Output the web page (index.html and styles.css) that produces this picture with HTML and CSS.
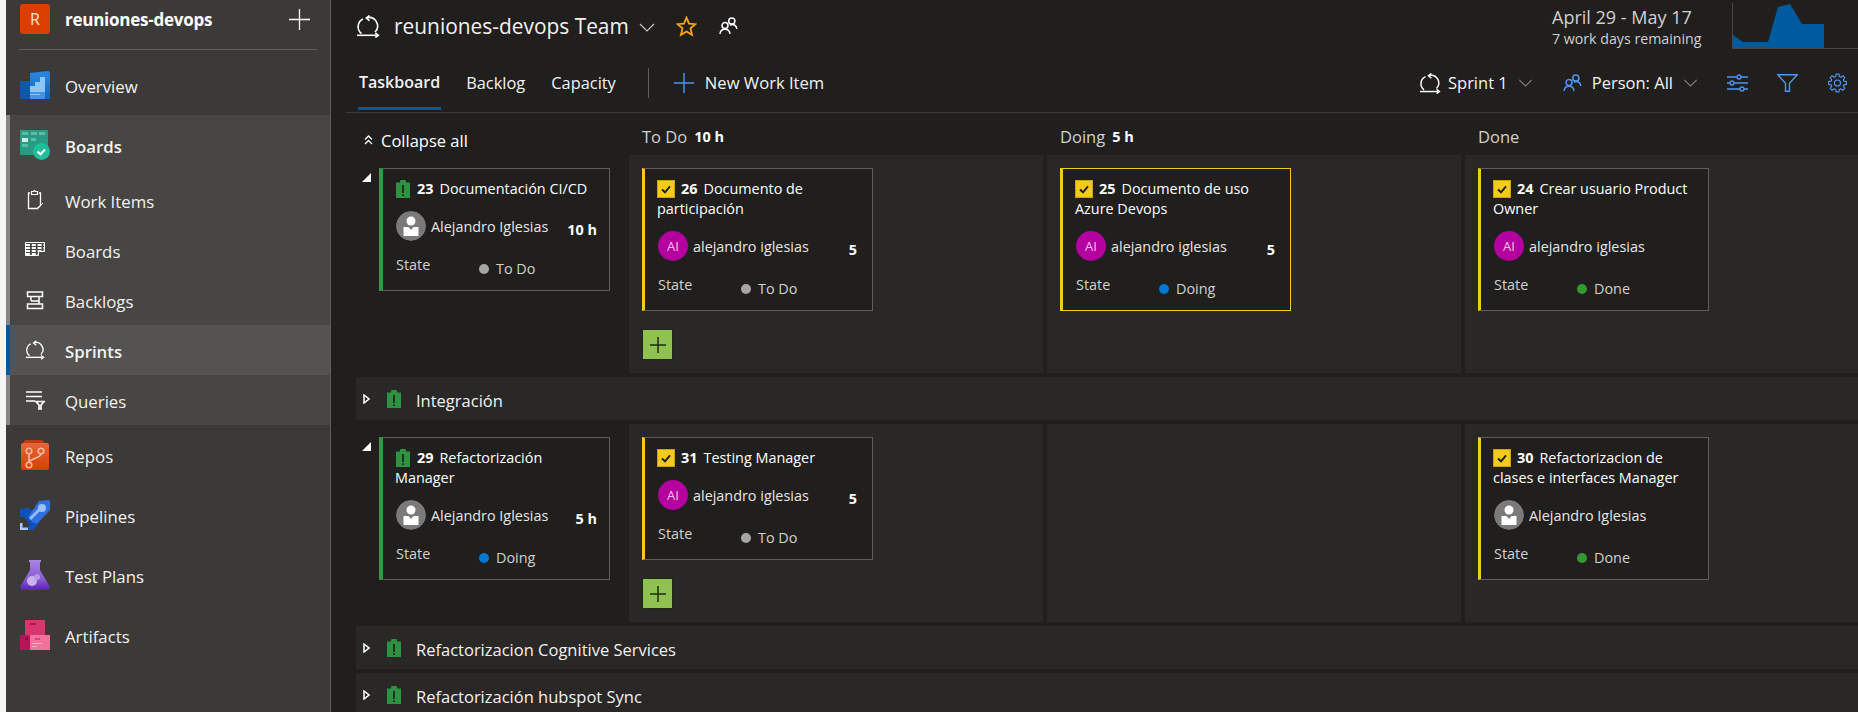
FILE: index.html
```html
<!DOCTYPE html>
<html lang="en">
<head>
<meta charset="utf-8">
<title>Taskboard</title>
<link rel="stylesheet" href="styles.css">
</head>
<body>
<svg class="defs" aria-hidden="true">
  <symbol id="sprint" viewBox="0 0 24 23"><g fill="none" stroke="currentColor" stroke-width="1.600"><path d="M11 2.700A8.500 8.500 0 0 1 19 17"/><path d="M7 4A8.500 8.500 0 0 0 5.500 18.500"/><path d="M13.500.5 10.300 3l3.200 2.700"/><path d="M1 20.300h20"/><path d="M19.300 18l3 2.300-3 2.300"/></g></symbol>
  <symbol id="people" viewBox="0 0 19 18"><g fill="none" stroke="currentColor" stroke-width="1.500"><circle cx="12.800" cy="4" r="3.100"/><circle cx="6" cy="8.600" r="3"/><path d="M1 17c.3-3 2-4.800 5-4.800s4.700 1.800 5 4.800"/><path d="M11 8.500c.6-.6 1.100-.9 2-.9 2.600 0 4.400 1.600 4.800 4.400"/></g></symbol>
  <symbol id="chev" viewBox="0 0 16 9"><path d="M1 1l7 7 7-7" fill="none" stroke="currentColor" stroke-width="1.200"/></symbol>
  <symbol id="req" viewBox="0 0 14 18"><path fill="#2f9142" d="M0 2.500h4V.5L5 0h4l1 .5v2h4V18H0z"/><path fill="#16351e" d="M6 5h2v8H6zM6 14.300h2v1.700H6z"/></symbol>
  <symbol id="task" viewBox="0 0 18 18"><rect x=".5" y=".5" width="17" height="17" fill="#f2cb1d" stroke="#c9a11a"/><path d="M5 9.500l3 2.800 5-6" fill="none" stroke="#1f1e1d" stroke-width="1.900"/></symbol>
  <symbol id="user" viewBox="0 0 30 30"><circle cx="15" cy="15" r="15" fill="#7a7a7a"/><circle cx="15" cy="10" r="4.500" fill="#fff"/><path fill="#fff" d="M7.500 16h5l2.500 3 2.500-3h5v9H7.500z"/></symbol>
  <symbol id="open" viewBox="0 0 9 9"><path fill="#fff" d="M9 0v9H0z"/></symbol>
  <symbol id="closed" viewBox="0 0 7 10"><path d="M1 1l5 4-5 4z" fill="none" stroke="#fff" stroke-width="1.500"/></symbol>
</svg>

<nav class="sidebar">
  <div class="project">
    <span class="project-badge">R</span>
    <span class="project-name">reuniones-devops</span>
    <svg class="project-add" viewBox="0 0 21 21"><path d="M10.500 0v21M0 10.500h21" stroke="currentColor" stroke-width="1.300"/></svg>
  </div>
  <div class="nav-rule"></div>
  <a class="nav-item">
    <svg class="nav-icon" viewBox="0 0 30 28"><defs><linearGradient id="ov" x1="0" y1="0" x2="0" y2="1"><stop offset="0" stop-color="#2b88e0"/><stop offset="1" stop-color="#0d66c2"/></linearGradient></defs><path fill="#0f5aa8" d="M0 10h11v18H2a2 2 0 0 1-2-2z"/><path fill="url(#ov)" d="M10 2l18-2a2 2 0 0 1 2 2v26H10z"/><path fill="#8cc6f5" d="M10 15h5v-4h5V6h5v14H10z"/><path fill="#3e95e2" d="M10 20h15v8H10z"/><path fill="#8cc6f5" d="M10 20h15v1H10zM10 23h10v1H10z"/></svg>
    <span>Overview</span>
  </a>
  <div class="nav-group">
    <a class="nav-item nav-head">
      <svg class="nav-icon" viewBox="0 0 30 30"><rect width="28" height="25" rx="1" fill="#2a9a82"/><path fill="#4cc2a8" d="M2 2h6v3H2zM11 2h6v3h-6zM19 2h6v3h-6zM11 8h5v3h-5zM2 14h6v3H2z"/><path fill="#c9f2e6" d="M2 8h6v4H2z"/><circle cx="21.500" cy="21.500" r="8.500" fill="#1fbf9b"/><path d="M17.500 21.500l3 2.800 4.500-4.800" fill="none" stroke="#fff" stroke-width="2"/></svg>
      <span>Boards</span>
    </a>
    <a class="nav-item nav-sub">
      <svg class="sub-icon" viewBox="0 0 20 20"><path d="M5 3H3.500v15.500h9l3-3V3H14" fill="none" stroke="currentColor" stroke-width="1.300"/><path d="M6.500 4.500V1.500h2l1-1 1 1h2v3z" fill="none" stroke="currentColor" stroke-width="1.200"/><path d="M12.500 18l2-1.500 3.500-3.500" fill="none" stroke="currentColor"/></svg>
      <span>Work Items</span>
    </a>
    <a class="nav-item nav-sub">
      <svg class="sub-icon" viewBox="0 0 20 20"><path fill="none" stroke="currentColor" d="M.5 2.500h19v9h-6v4h-13z"/><path stroke="currentColor" stroke-dasharray="4 1.800" stroke-width="2" d="M1 5h18M1 8h18M1 11h18M1 14h12"/></svg>
      <span>Boards</span>
    </a>
    <a class="nav-item nav-sub">
      <svg class="sub-icon" viewBox="0 0 20 20"><path fill="none" stroke="currentColor" stroke-width="1.500" d="M2.500 2h15v4.500h-15zM6 6.500v4.500M14 6.500v4.500M2.500 14h15v4.500h-15zM6 11h8v3"/></svg>
      <span>Backlogs</span>
    </a>
    <a class="nav-item nav-sub nav-current">
      <svg class="sub-icon"><use href="#sprint"/></svg>
      <span>Sprints</span>
    </a>
    <a class="nav-item nav-sub">
      <svg class="sub-icon" viewBox="0 0 20 20"><path fill="none" stroke="currentColor" stroke-width="1.500" d="M1 2h16M1 6.500h16M1 11h9"/><path fill="none" stroke="currentColor" stroke-width="1.700" d="M11 11.500h8l-3 3.500v4h-2v-4z"/></svg>
      <span>Queries</span>
    </a>
  </div>
  <a class="nav-item">
    <svg class="nav-icon" viewBox="0 0 30 30"><defs><linearGradient id="rp" x1="0" y1="0" x2="0" y2="1"><stop offset="0" stop-color="#e6663a"/><stop offset="1" stop-color="#d63f06"/></linearGradient></defs><path fill="#c23a10" d="M5 0h17l3 3H3z"/><rect x="1" y="3" width="28" height="27" rx="2" fill="url(#rp)"/><g fill="none" stroke="#f6b8a0" stroke-width="1.600"><circle cx="9" cy="11" r="2.800"/><circle cx="21" cy="11" r="2.800"/><circle cx="9" cy="25" r="2.800"/><path d="M9 14v8M21 14c0 4-10 4-12 8"/></g></svg>
    <span>Repos</span>
  </a>
  <a class="nav-item">
    <svg class="nav-icon" viewBox="0 0 30 30"><path fill="#0d51bf" d="M0 9l9-1 8 8 1 8-5 6H9l-1-4 2-1-6-8H0z"/><path fill="#2f6fe0" d="M19 1l10-1 1 1v9L17 24l-5-2-4-5z"/><path fill="#97bdf5" d="M9 18l11-11 2 2-11 11z"/><circle cx="22" cy="8" r="4" fill="#9cc2f5"/><path fill="#a9c8f7" d="M0 23h2.500v4.500H8V30H0z"/></svg>
    <span>Pipelines</span>
  </a>
  <a class="nav-item">
    <svg class="nav-icon" viewBox="0 0 30 30"><defs><linearGradient id="tp" x1="0" y1="0" x2="0" y2="1"><stop offset="0" stop-color="#a67fe2"/><stop offset=".6" stop-color="#8a5bd2"/><stop offset="1" stop-color="#5a25ae"/></linearGradient></defs><path fill="#a98ae0" d="M9 0h12v2H9z"/><path fill="url(#tp)" d="M10 2h10v8l10 17-2 3H2l-2-3 10-17z"/><circle cx="12" cy="21" r="5" fill="#c9b2ee"/><circle cx="17" cy="17" r="3" fill="#b79ae8"/></svg>
    <span>Test Plans</span>
  </a>
  <a class="nav-item">
    <svg class="nav-icon" viewBox="0 0 30 30"><path fill="#d6376f" d="M5 0h20v15H5z"/><path fill="#a8174f" d="M10 3h6v2h-6z"/><path fill="#b8145a" d="M0 15h10v15H0z"/><path fill="#f2709c" d="M10 15h20v15H10z"/><path fill="#c74a7c" d="M15 18h5v2h-5z"/><path fill="#f9b0c8" d="M12 23h10v1H12zM12 26h5v1h-5z"/><path fill="#7e0f3f" d="M5 18h3v2H5z"/></svg>
    <span>Artifacts</span>
  </a>
</nav>

<main class="main">
  <header class="topbar">
    <svg class="title-icon"><use href="#sprint"/></svg>
    <span class="team">reuniones-devops Team</span>
    <svg class="team-chev"><use href="#chev"/></svg>
    <svg class="star" viewBox="0 0 20 20"><path d="M10 1.500l2.400 5.800 6.100.5-4.700 4 1.500 6.100L10 14.700l-5.300 3.200 1.500-6.100-4.700-4 6.100-.5z" fill="none" stroke="#f7a70b" stroke-width="1.700"/></svg>
    <svg class="team-people"><use href="#people"/></svg>
    <div class="sprint-dates">
      <div class="dates">April 29 - May 17</div>
      <div class="remaining">7 work days remaining</div>
    </div>
    <svg class="burndown" viewBox="0 0 126 49"><path fill="#005a9e" d="M1 35l10 7h25l10-35 12-3 12 20h22v24H1z"/><path fill="none" stroke="#484644" d="M.5 3v45.500H126"/></svg>
  </header>

  <div class="toolbar">
    <a class="tab tab-on">Taskboard</a>
    <a class="tab">Backlog</a>
    <a class="tab">Capacity</a>
    <span class="tool-sep"></span>
    <svg class="new-plus" viewBox="0 0 20 20"><path d="M10 0v20M0 10h20" stroke="#4f95f2" stroke-width="1.400"/></svg>
    <span class="new-text">New Work Item</span>
    <div class="tool-right">
      <svg class="tool-sprint"><use href="#sprint"/></svg>
      <span class="tool-label">Sprint 1</span>
      <svg class="tool-chev"><use href="#chev"/></svg>
      <svg class="tool-people"><use href="#people"/></svg>
      <span class="tool-label">Person: All</span>
      <svg class="tool-chev"><use href="#chev"/></svg>
      <svg class="tool-icon tool-sliders" viewBox="0 0 21 18"><g fill="none" stroke="#4f95f2" stroke-width="1.300"><path d="M0 3h21M0 9h21M0 15h21"/><circle cx="12" cy="3" r="2" fill="#201f1e"/><circle cx="5" cy="9" r="2" fill="#201f1e"/><circle cx="15" cy="15" r="2" fill="#201f1e"/></g></svg>
      <svg class="tool-icon tool-funnel" viewBox="0 0 21 18"><path d="M.8.800h19.400l-7.700 8.400v8h-4v-8z" fill="none" stroke="#4f95f2" stroke-width="1.400"/></svg>
      <svg class="tool-icon" viewBox="-10.500 -10.500 21 21"><g fill="none" stroke="#4f95f2" stroke-width="1.200" stroke-linejoin="round"><polygon points="6.730,-1.930 9.380,-1.490 9.380,1.490 6.730,1.930 6.120,3.390 7.690,5.580 5.580,7.690 3.390,6.120 1.930,6.730 1.490,9.380 -1.490,9.380 -1.930,6.730 -3.390,6.120 -5.580,7.690 -7.690,5.580 -6.120,3.390 -6.730,1.930 -9.380,1.490 -9.380,-1.490 -6.730,-1.930 -6.120,-3.390 -7.690,-5.580 -5.580,-7.690 -3.390,-6.120 -1.930,-6.730 -1.490,-9.380 1.490,-9.380 1.930,-6.730 3.390,-6.120 5.580,-7.690 7.690,-5.580 6.120,-3.390"/><circle r="3.200"/></g></svg>
    </div>
  </div>

  <section class="board">
    <div class="collapse-all"><svg class="collapse-icon" viewBox="0 0 9 10"><path d="M1 4.500l3.500-3.500 3.500 3.500M1 9l3.500-3.500L8 9" fill="none" stroke="#fff" stroke-width="1.300"/></svg><span>Collapse all</span></div>
    <div class="col-head"><span>To Do</span><b>10 h</b></div>
    <div class="col-head"><span>Doing</span><b>5 h</b></div>
    <div class="col-head"><span>Done</span></div>

    <div class="parent">
      <svg class="twist"><use href="#open"/></svg>
      <article class="card card-req">
        <div class="card-title"><svg class="wi-req"><use href="#req"/></svg><b>23</b><span>Documentación CI/CD</span></div>
        <div class="person"><svg class="avatar"><use href="#user"/></svg><span>Alejandro Iglesias</span></div>
        <div class="state-row"><span class="state-label">State</span><span class="state-dot todo"></span><span class="state-value">To Do</span><b class="effort">10 h</b></div>
      </article>
    </div>
    <div class="cell">
      <article class="card card-task">
        <div class="card-title"><svg class="wi-task"><use href="#task"/></svg><b>26</b><span>Documento de participación</span></div>
        <div class="person"><span class="avatar avatar-ai">AI</span><span>alejandro iglesias</span></div>
        <div class="state-row"><span class="state-label">State</span><span class="state-dot todo"></span><span class="state-value">To Do</span><b class="effort">5</b></div>
      </article>
      <button class="add" type="button"><svg viewBox="0 0 16 16"><path d="M8 0v16M0 8h16" stroke="#1f2a14" stroke-width="1.500"/></svg></button>
    </div>
    <div class="cell">
      <article class="card card-task card-selected">
        <div class="card-title"><svg class="wi-task"><use href="#task"/></svg><b>25</b><span>Documento de uso Azure Devops</span></div>
        <div class="person"><span class="avatar avatar-ai">AI</span><span>alejandro iglesias</span></div>
        <div class="state-row"><span class="state-label">State</span><span class="state-dot doing"></span><span class="state-value">Doing</span><b class="effort">5</b></div>
      </article>
    </div>
    <div class="cell">
      <article class="card card-task">
        <div class="card-title"><svg class="wi-task"><use href="#task"/></svg><b>24</b><span>Crear usuario Product Owner</span></div>
        <div class="person"><span class="avatar avatar-ai">AI</span><span>alejandro iglesias</span></div>
        <div class="state-row"><span class="state-label">State</span><span class="state-dot done"></span><span class="state-value">Done</span></div>
      </article>
    </div>

    <div class="group"><svg class="twist-closed"><use href="#closed"/></svg><svg class="group-req"><use href="#req"/></svg><span>Integración</span></div>

    <div class="parent">
      <svg class="twist"><use href="#open"/></svg>
      <article class="card card-req">
        <div class="card-title"><svg class="wi-req"><use href="#req"/></svg><b>29</b><span>Refactorización Manager</span></div>
        <div class="person"><svg class="avatar"><use href="#user"/></svg><span>Alejandro Iglesias</span></div>
        <div class="state-row"><span class="state-label">State</span><span class="state-dot doing"></span><span class="state-value">Doing</span><b class="effort">5 h</b></div>
      </article>
    </div>
    <div class="cell">
      <article class="card card-task">
        <div class="card-title"><svg class="wi-task"><use href="#task"/></svg><b>31</b><span>Testing Manager</span></div>
        <div class="person"><span class="avatar avatar-ai">AI</span><span>alejandro iglesias</span></div>
        <div class="state-row"><span class="state-label">State</span><span class="state-dot todo"></span><span class="state-value">To Do</span><b class="effort">5</b></div>
      </article>
      <button class="add" type="button"><svg viewBox="0 0 16 16"><path d="M8 0v16M0 8h16" stroke="#1f2a14" stroke-width="1.500"/></svg></button>
    </div>
    <div class="cell"></div>
    <div class="cell">
      <article class="card card-task">
        <div class="card-title"><svg class="wi-task"><use href="#task"/></svg><b>30</b><span>Refactorizacion de clases e interfaces Manager</span></div>
        <div class="person"><svg class="avatar"><use href="#user"/></svg><span>Alejandro Iglesias</span></div>
        <div class="state-row"><span class="state-label">State</span><span class="state-dot done"></span><span class="state-value">Done</span></div>
      </article>
    </div>

    <div class="group"><svg class="twist-closed"><use href="#closed"/></svg><svg class="group-req"><use href="#req"/></svg><span>Refactorizacion Cognitive Services</span></div>
    <div class="group"><svg class="twist-closed"><use href="#closed"/></svg><svg class="group-req"><use href="#req"/></svg><span>Refactorización hubspot Sync</span></div>
  </section>
</main>
</body>
</html>
```
FILE: styles.css
```css
* { box-sizing: border-box; }
html, body { height: 100%; }
body {
  margin: 0;
  display: flex;
  height: 712px;
  overflow: hidden;
  background: #201f1e;
  color: #fff;
  font-family: "Open Sans", "Liberation Sans", sans-serif;
  font-size: 14px;
}
.defs { display: none; }
svg { display: block; flex: none; }

.sidebar {
  width: 331px;
  flex: none;
  height: 712px;
  background: #3b3a39;
  border-left: 6px solid #f5f5f5;
  border-right: 1px solid #5f5e5c;
  display: flex;
  flex-direction: column;
}
.project { display: flex; align-items: center; height: 49px; padding: 0 14px 11px; flex: none; }
.project-badge {
  width: 30px; height: 30px; border-radius: 3px; background: #dc3e00; color: #fde7dc;
  display: flex; align-items: center; justify-content: center; font-size: 16px;
}
.project-name { margin-left: 15px; font-size: 17px; font-weight: 700; letter-spacing: -0.25px; }
.project-add { width: 21px; height: 21px; margin-left: auto; margin-right: 6px; color: #fff; }
.nav-rule { height: 1px; background: #5f5e5c; margin: 0 13px; flex: none; }
.nav-item {
  display: flex; align-items: center; height: 60px; flex: none;
  padding-left: 14px; font-size: 16.8px; color: #f3f2f1;
}
.project + .nav-rule + .nav-item { margin-top: 5px; }
.nav-item > span { margin-left: 15px; line-height: 60px; padding-top: 4px; }
.nav-icon { width: 30px; height: 30px; }
.nav-group { flex: none; background: #484644; border-left: 4px solid #858585; }
.nav-group .nav-item { padding-left: 10px; }
.nav-head { font-weight: 600; }
.nav-sub { height: 50px; }
.nav-sub > span { line-height: 50px; margin-left: 15px; }
.sub-icon { width: 20px; height: 20px; margin: 0 5px; color: #fff; }
.nav-current { background: #545352; font-weight: 600; position: relative; }
.nav-current::before { content: ""; position: absolute; left: -4px; top: 0; bottom: 0; width: 4px; background: #005a9e; }

.main { flex: 1; min-width: 0; height: 712px; overflow: hidden; }
.topbar { display: flex; align-items: center; height: 54px; padding-left: 25px; overflow: hidden; }
.title-icon { width: 24px; height: 23px; color: #fff; margin-top: -2px; }
.team { margin-left: 14px; font-size: 20.9px; color: #f3f2f1; margin-top: -2px; }
.team-chev { width: 16px; height: 9px; margin-left: 10px; color: #c8c6c4; }
.star { width: 21px; height: 21px; margin-left: 21px; margin-top: -1px; }
.team-people { width: 19px; height: 18px; margin-left: 22px; color: #fff; margin-top: -3px; }
.sprint-dates { margin-left: auto; width: 180px; color: #d2d0ce; }
.dates { font-size: 18px; line-height: 24px; }
.remaining { font-size: 14.2px; line-height: 20px; }
.burndown { width: 126px; height: 49px; margin-top: -5px; }

.toolbar {
  display: flex; align-items: center; height: 59px; margin-left: 15px; padding: 0 10px 0 13px;
  border-bottom: 1px solid #3b3a39; font-size: 16.4px;
}
.tab { position: relative; margin-right: 26px; margin-top: -2px; color: #f3f2f1; }
.tab-on { font-weight: 600; font-size: 16px; }
.tab-on::after { content: ""; position: absolute; left: -1px; right: -1px; top: 36px; height: 3px; background: #005a9e; }
.tool-sep { width: 1px; height: 30px; background: #605e5c; margin-left: 6px; }
.new-plus { width: 20px; height: 20px; margin-left: 25px; }
.new-text { margin-left: 11px; color: #f3f2f1; font-size: 16.6px; margin-top: -2px; }
.tool-right { margin-left: auto; display: flex; align-items: center; }
.tool-sprint { width: 22px; height: 21px; color: #fff; }
.tool-label { margin-left: 7px; color: #f3f2f1; margin-top: -2px; font-size: 16.5px; }
.tool-chev { width: 15px; height: 8px; margin-left: 10px; color: #8a8886; }
.tool-people { width: 19px; height: 18px; margin-left: 30px; margin-right: 3px; color: #4f95f2; }
.tool-icon { width: 21px; height: 20px; margin-left: 29px; }
.tool-sliders { height: 18px; }
.tool-funnel { height: 18px; }

.board {
  display: grid;
  grid-template-columns: 269px repeat(3, 414px);
  grid-auto-rows: min-content;
  gap: 4px;
  margin-left: 25px;
}
.collapse-all { display: flex; align-items: center; height: 38px; padding: 16px 0 0 8px; font-size: 16.5px; }
.collapse-icon { width: 9px; height: 10px; margin-right: 8px; }
.col-head { display: flex; align-items: center; height: 38px; padding: 8px 0 0 13px; font-size: 16.5px; color: #d2d0ce; }
.col-head b { margin-left: 7px; font-size: 14.5px; font-weight: 700; color: #fff; padding-top: 1px; }

.parent { display: flex; align-items: flex-start; padding-top: 13px; }
.twist { width: 9px; height: 9px; margin: 5px 8px 0 6px; }
.cell { background: #292827; padding: 13px; min-width: 0; }
.card {
  width: 231px; background: #201f1e; border: 1px solid #605e5c;
  padding: 10px 15px 11px 12px; line-height: 20px; font-size: 14.4px;
}
.card-req { border-left: 4px solid #339947; padding-right: 12px; }
.card-task { border-left: 3px solid #f2cb1d; }
.card-selected { border-color: #f2cb1d; }
.card-title { min-height: 20px; }
.card-title svg { display: inline-block; vertical-align: -4px; }
.card-title b { margin: 0 6px; font-weight: 700; }
.wi-req { width: 14px; height: 18px; margin-left: 1px; margin-right: 1px; }
.wi-task { width: 18px; height: 18px; }
.person { display: flex; align-items: center; height: 30px; margin-top: 12px; color: #e8e6e4; }
.person span:last-child { margin-left: 5px; padding-top: 2px; }
.avatar { width: 30px; height: 30px; flex: none; border-radius: 50%; margin-left: 1px; }
.avatar-ai {
  background: #b4009e; color: #f9c8ef; display: flex; align-items: center; justify-content: center;
  font-size: 13px;
}
.state-row { display: flex; align-items: center; height: 20px; margin-top: 18px; color: #d2d0ce; position: relative; }
.state-label { width: 84px; padding-left: 1px; margin-top: -8px; }
.state-dot { width: 10px; height: 10px; border-radius: 50%; flex: none; }
.todo { background: #a6a6a6; }
.doing { background: #0078d4; }
.done { background: #339933; }
.state-value { margin-left: 7px; margin-top: -1px; }
.effort { position: absolute; right: 0; top: -39px; color: #fff; font-weight: 700; }
.add {
  display: flex; align-items: center; justify-content: center;
  width: 31px; height: 31px; margin-top: 18px; padding: 0;
  background: #8fc24f; border: 1px solid #1f2a14;
}
.add svg { width: 16px; height: 16px; }
.group {
  grid-column: 1 / -1; display: flex; align-items: center; height: 43px;
  background: #292827; padding-left: 7px; font-size: 16.5px; color: #f3f2f1;
}
.twist-closed { width: 7px; height: 10px; }
.group-req { width: 14px; height: 18px; margin-left: 17px; }
.group > span { margin-left: 15px; padding-top: 3px; }
```
